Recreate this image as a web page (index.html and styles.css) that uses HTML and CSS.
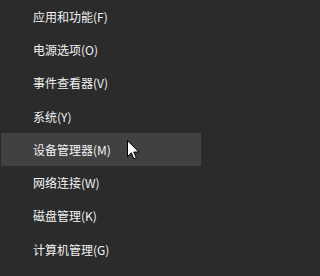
FILE: index.html
```html
<!DOCTYPE html>
<html>
<head>
<meta charset="utf-8">
<link rel="stylesheet" href="styles.css">
</head>
<body>
<ul class="menu">
  <li class="item">应用和功能(F)</li>
  <li class="item">电源选项(O)</li>
  <li class="item">事件查看器(V)</li>
  <li class="item">系统(Y)</li>
  <li class="item hover">设备管理器(M)</li>
  <li class="item">网络连接(W)</li>
  <li class="item">磁盘管理(K)</li>
  <li class="item">计算机管理(G)</li>
</ul>
<svg class="cursor" width="13" height="20" viewBox="0 0 13 20">
  <path d="M0.5 0.5 L0.5 16.5 L4.3 12.8 L6.9 18.8 L9.3 17.8 L6.8 12 L11.8 12 Z" fill="#fff" stroke="#000" stroke-width="1" stroke-linejoin="miter"/>
</svg>
</body>
</html>
```
FILE: styles.css
```css
html, body {
  margin: 0;
  padding: 0;
  background: #2b2b2b;
  width: 201px;
  height: 276px;
  overflow: hidden;
}
.menu {
  list-style: none;
  margin: 0;
  padding: 0;
  display: flex;
  flex-direction: column;
}
.item {
  height: 33.3px;
  display: flex;
  align-items: center;
  padding-left: 32px;
  margin-left: 1px;
  color: #f2f2f2;
  font-family: "Noto Sans CJK SC", "Noto Sans", sans-serif;
  font-size: 12px;
  line-height: 1;
  white-space: nowrap;
}
.hover {
  background: #414141;
}
.cursor {
  position: absolute;
  left: 127px;
  top: 140px;
}
```
